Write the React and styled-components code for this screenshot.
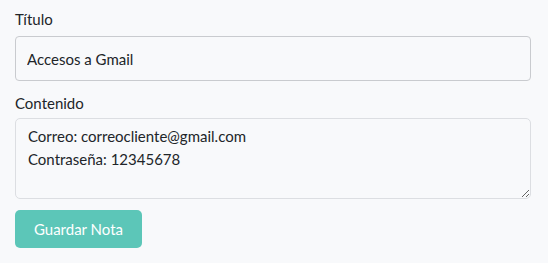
import React from 'react'
import styled, { createGlobalStyle } from 'styled-components'

const GlobalStyle = createGlobalStyle`
  html, body {
    margin: 0;
    background: #f8f9fb;
  }
  body {
    font-family: Lato, 'Noto Sans', sans-serif;
    color: #212529;
  }
`

const Form = styled.form`
  display: flex;
  flex-direction: column;
  padding: 8px 17px 0 15px;
`

const Field = styled.div`
  display: flex;
  flex-direction: column;
  margin-bottom: ${props => props.gap || 11}px;
`

const Label = styled.label`
  font-size: 15px;
  line-height: 22px;
  margin-bottom: ${props => props.space || 6}px;
  color: #212529;
`

const Input = styled.input`
  box-sizing: border-box;
  height: 45px;
  padding: 0 11px;
  font-family: inherit;
  font-size: 15px;
  color: #212529;
  background: #f8f9fb;
  border: 1px solid #c9cbcf;
  border-radius: 4px;
  outline: none;
`

const TextArea = styled.textarea`
  box-sizing: border-box;
  height: 81px;
  padding: 6px 12px 5px;
  font-family: inherit;
  font-size: 15px;
  line-height: 23px;
  color: #212529;
  background: #f8f9fb;
  border: 1px solid #dcdee2;
  border-radius: 5px;
  outline: none;
  resize: vertical;
`

const Button = styled.button`
  align-self: flex-start;
  width: 127px;
  height: 38px;
  border: none;
  border-radius: 5px;
  background: #5cc6b8;
  color: #ffffff;
  font-family: inherit;
  font-size: 15px;
  cursor: pointer;
`

const App = () => (
  <>
    <GlobalStyle />
    <Form onSubmit={e => e.preventDefault()}>
      <Field>
        <Label>Título</Label>
        <Input defaultValue="Accesos a Gmail" />
      </Field>
      <Field gap={11}>
        <Label space={4}>Contenido</Label>
        <TextArea
          defaultValue={'Correo: correocliente@gmail.com\nContraseña: 12345678'}
        />
      </Field>
      <Button type="submit">Guardar Nota</Button>
    </Form>
  </>
)

export default App
